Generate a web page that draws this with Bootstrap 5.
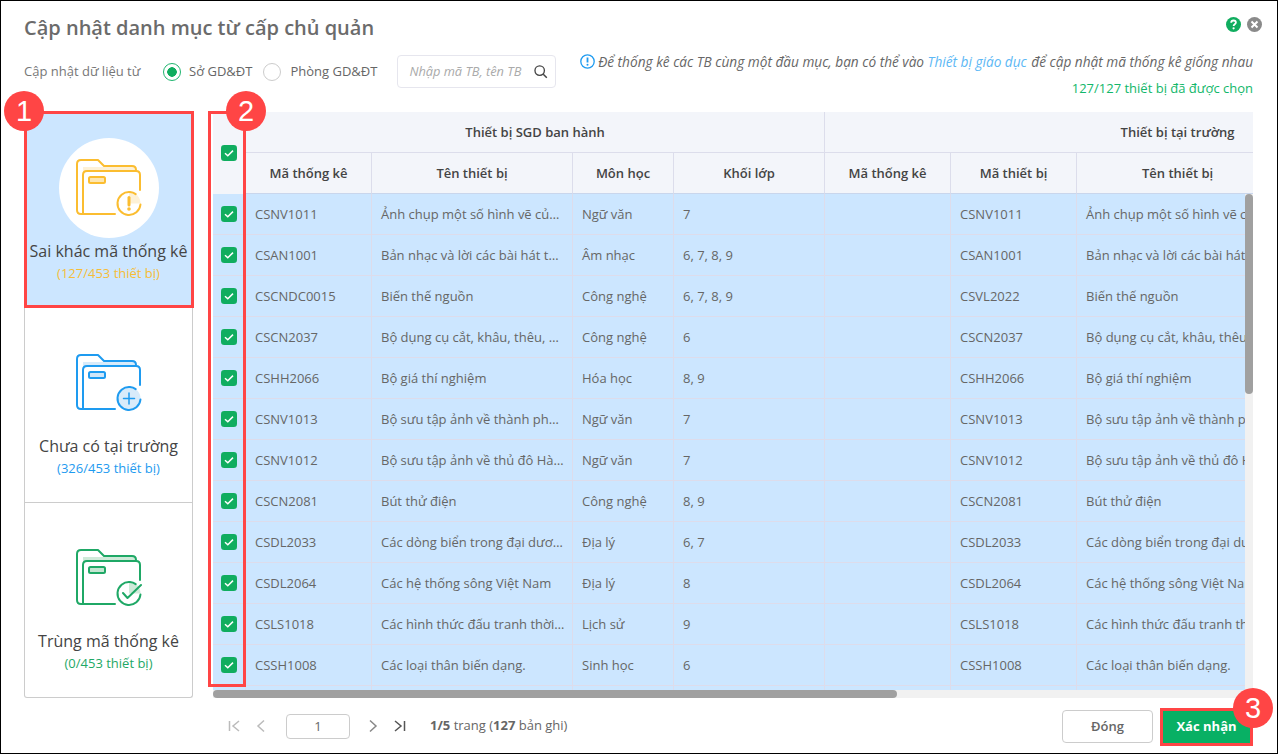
<!DOCTYPE html>
<html lang="vi">
<head>
<meta charset="utf-8">
<title>Cập nhật danh mục từ cấp chủ quản</title>
<link href="https://cdn.jsdelivr.net/npm/bootstrap@5.3.0/dist/css/bootstrap.min.css" rel="stylesheet">
<style>
html,body{height:100%;overflow:hidden}
body{margin:0;background:#fff;font-family:"Open Sans","Noto Sans",sans-serif;font-size:13px;color:#666}
.dlg{width:1278px;height:754px;border:1px solid #000;padding:0 24px 0 23px;display:flex;flex-direction:column;overflow:hidden;background:#fff}
.dlg-head{height:54px;flex:none}
.dlg-title{font-size:20px;font-weight:600;color:#6b6b6b;margin:0;line-height:27px;padding-top:13px}
.dlg-tools{padding-top:16px;margin-right:-9px;gap:6px}
.filter{height:57px;flex:none}
.f-label{color:#777;font-size:13px;width:139px}
.f-radio{display:flex;align-items:center;gap:8px;font-size:13px;color:#666;margin:0}
.f-radio input{width:18px;height:18px;margin:0;border:1px solid #ccc;box-shadow:none;background-color:#fff}
.f-radio input:checked{border-color:#1fb56f;background-color:#fff;background-image:radial-gradient(circle,#10ad5f 0 4.5px,transparent 5px)}
.f-radio-b{margin-left:11px;gap:9px}
.f-search{width:159px;height:33px;border:1px solid #e6e6ee;border-radius:4px;margin-left:20px;padding:0 7px 0 11px;flex:none}
.f-search input{border:0;outline:0;width:100%;min-width:0;padding:0;font-size:12.8px;font-style:italic;background:none}
.f-search input::placeholder{color:#aaa}
.f-hint{font-size:13.65px;font-style:italic;color:#666;line-height:18px;white-space:nowrap;margin-top:-2px}
.f-hint a{color:#5cb8f5;text-decoration:none;margin-right:1px}
.f-count{font-size:13px;color:#12b76a;line-height:18px;margin-top:8px}
.body-row{height:586px;flex:none;gap:20px}
.cat-list{width:169px;flex:none;border-radius:0}
.cat-item{height:195px;padding:25px 0 0;border:1px solid #ccc;border-radius:0!important;display:flex;flex-direction:column;align-items:center;background:#fff;flex:none}
.cat-item:first-child{height:196px}
.cat-item+.cat-item{border-top-width:0}
.cat-item:last-child{border-radius:0 0 3px 3px!important}
.cat-item.on{background:#cce6ff}
.cat-ico{width:100px;height:100px;border-radius:50%;display:flex;align-items:center;justify-content:center;flex:none}
.on .cat-ico{background:#fff}
.cat-name{font-size:16px;color:#444;line-height:26px;white-space:nowrap}
.cat-num{font-size:13px;line-height:18px}
.c-y{color:#f7bd37}.c-b{color:#1e9bf0}.c-g{color:#1fa866}
.tbl-box{width:1040px;position:relative;overflow:hidden;flex:none;background:#f1f1f1}
.dm-table{--bs-table-bg:#cce6ff;--bs-table-color:#666;table-layout:fixed;width:1318px;border-collapse:separate;border-spacing:0;margin:0;font-size:13px}
.dm-table>thead>tr>th{background:#f3f5fa;color:#444;font-weight:600;text-align:center;height:41px;padding:2px 10px 0;vertical-align:middle;border-bottom:1px solid #dcddeb;border-right:1px solid #dcddeb}
.dm-table>thead>tr>th.nb{border-bottom-color:#f3f5fa;border-right-color:#f3f5fa}
.dm-table>thead>tr>th.hl{border-bottom-color:#c9d6ec}
.dm-table>tbody>tr>td{height:41px;padding:2px 6px 0 9px;vertical-align:middle;border-bottom:1px solid #dddceb;border-right:1px solid #dddceb;white-space:nowrap;overflow:hidden;text-overflow:ellipsis;box-shadow:none}
.dm-check{width:16px;height:16px;margin:0;display:block;border:0;border-radius:3px;background-color:#10ad5f;box-shadow:none;margin-left:8px}
.dm-check:checked{background-color:#10ad5f;background-size:16px 16px;background-image:url("data:image/svg+xml,%3csvg xmlns='http://www.w3.org/2000/svg' viewBox='0 0 16 16'%3e%3cpath fill='none' stroke='%23fff' stroke-width='1.500' d='M4 8.200l2.800 2.600L12 5.600'/%3e%3c/svg%3e")}
.dm-table .cc{padding:0!important}
.sb-v{position:absolute;right:0;top:82px;width:8px;height:200px;background:#a0a0a0;border-radius:4px}
.sb-vt{position:absolute;right:0;top:82px;bottom:0;width:8px;background:#f1f1f1}
.sb-ht{position:absolute;left:0;right:0;bottom:0;height:8px;background:#f1f1f1}
.sb-h{position:absolute;left:0;bottom:0;width:684px;height:8px;background:#a0a0a0;border-radius:4px}
.foot{height:54px;flex:none;padding:2px 0 0 204px}
.pg-ico{width:12px;height:14px;flex:none;display:block}
.pg-g1{margin-left:15px}.pg-g2{margin-left:19px}.pg-g3{margin-left:17px}.pg-g4{margin-left:15px}
.pg-input{width:64px;height:25px;border:1px solid #ccc;border-radius:4px;text-align:center;font-size:13px;color:#666;padding:0;outline:0}
.pg-text{font-size:13px;color:#666;margin-left:24px}
.pg-text b{font-weight:700}
.btn-close-d{width:91px;height:33px;border:1px solid #ccc;border-radius:4px;background:#fff;color:#666;font-size:13px;font-weight:600;padding:1px 0 0}
.btn-ok{width:87px;height:33px;border:0;border-radius:0;background:#08b064;color:#fff;font-size:13px;font-weight:700;padding:1px 0 0;margin-left:10px;margin-right:3px}
.mark-box{position:absolute;border:3px solid #ff4545;pointer-events:none}
.mark-num{position:absolute;width:40px;height:40px;border-radius:50%;background:#ff4545;color:#fff;font:400 29px/40px "Liberation Sans",sans-serif;text-align:center}
</style>
</head>
<body>
<div class="dlg">
  <div class="dlg-head d-flex justify-content-between align-items-start">
    <h1 class="dlg-title">Cập nhật danh mục từ cấp chủ quản</h1>
    <div class="dlg-tools d-flex">
      <svg width="15" height="15" viewBox="0 0 15 15"><circle cx="7.5" cy="7.5" r="7.5" fill="#10ad5f"/><path d="M5.2 5.8c0-1.5 1-2.3 2.4-2.3s2.3.8 2.3 2c0 1.800-2.300 1.700-2.300 3.500" fill="none" stroke="#fff" stroke-width="1.800"/><circle cx="7.600" cy="11.300" r="1.100" fill="#fff"/></svg>
      <svg width="15" height="15" viewBox="0 0 15 15"><circle cx="7.5" cy="7.5" r="7.5" fill="#8a8a8a"/><path d="M4.500 4.500l6 6M10.500 4.500l-6 6" stroke="#fff" stroke-width="2"/></svg>
    </div>
  </div>
  <div class="filter d-flex align-items-start">
    <div class="d-flex align-items-center" style="height:33px">
      <span class="f-label">Cập nhật dữ liệu từ</span>
      <label class="f-radio"><input class="form-check-input" type="radio" name="src" checked>Sở GD&amp;ĐT</label>
      <label class="f-radio f-radio-b"><input class="form-check-input" type="radio" name="src">Phòng GD&amp;ĐT</label>
      <div class="f-search d-flex align-items-center">
        <input type="text" placeholder="Nhập mã TB, tên TB">
        <svg width="17" height="17" viewBox="0 0 17 17" class="flex-none"><circle cx="7.500" cy="7.500" r="5.300" fill="none" stroke="#444" stroke-width="1.500"/><path d="M11.500 11.500l4 4" stroke="#444" stroke-width="1.700"/></svg>
      </div>
    </div>
    <div class="ms-auto text-end">
      <div class="f-hint"><svg width="15" height="15" viewBox="0 0 15 15" style="vertical-align:-2px;margin-right:3px"><circle cx="7.500" cy="7.500" r="6.700" fill="#fff" stroke="#1e9bf0" stroke-width="1.300"/><path d="M7.500 3.500v5" stroke="#1e9bf0" stroke-width="1.800"/><circle cx="7.500" cy="10.800" r="1" fill="#1e9bf0"/></svg>Để thống kê các TB cùng một đầu mục, bạn có thể vào <a href="#">Thiết bị giáo dục</a> để cập nhật mã thống kê giống nhau</div>
      <div class="f-count">127/127 thiết bị đã được chọn</div>
    </div>
  </div>
  <div class="body-row d-flex">
    <div class="cat-list list-group">
      <div class="list-group-item cat-item on">
        <div class="cat-ico">
          <svg width="66" height="58" viewBox="0 0 66 58" fill="none" stroke-linecap="round" stroke-linejoin="round" stroke-width="2" stroke="#fbbd30"><rect x="7" y="8" width="52" height="5" fill="#fdf1d6" stroke="none"/><path d="M7 55H5Q1 55 1 51V5Q1 1 5 1H22L28 7H56Q60 7 60 11"/><path d="M7 55V16Q7 12 11 12H60Q64 12 64 16V31M7 55H39"/><rect x="13" y="18" width="16" height="6" rx="1.500" fill="#fde6b0"/><path d="M53 33a11.500 11.500 0 0 1 11.500 11.500H53z" fill="#fdf1d6" stroke="none"/><circle cx="53" cy="44.500" r="11.500" stroke-dasharray="60 12" transform="rotate(5 53 44.500)"/><path d="M53 38.500v7.500" stroke-width="3"/><circle cx="53" cy="50" r=".8"/></svg>
        </div>
        <div class="cat-name">Sai khác mã thống kê</div>
        <div class="cat-num c-y">(127/453 thiết bị)</div>
      </div>
      <div class="list-group-item cat-item">
        <div class="cat-ico">
          <svg width="66" height="58" viewBox="0 0 66 58" fill="none" stroke-linecap="round" stroke-linejoin="round" stroke-width="2" stroke="#1e9bf0"><rect x="7" y="8" width="52" height="5" fill="#d8ebfa" stroke="none"/><path d="M7 55H5Q1 55 1 51V5Q1 1 5 1H22L28 7H56Q60 7 60 11"/><path d="M7 55V16Q7 12 11 12H60Q64 12 64 16V31M7 55H39"/><rect x="13" y="18" width="16" height="6" rx="1.500" fill="#cfe6f9"/><circle cx="53" cy="44.500" r="11.500" fill="#d8ebfa" stroke-dasharray="60 12" transform="rotate(5 53 44.500)"/><path d="M53 39v11M47.500 44.500h11" stroke-width="1.500"/></svg>
        </div>
        <div class="cat-name">Chưa có tại trường</div>
        <div class="cat-num c-b">(326/453 thiết bị)</div>
      </div>
      <div class="list-group-item cat-item">
        <div class="cat-ico">
          <svg width="66" height="58" viewBox="0 0 66 58" fill="none" stroke-linecap="round" stroke-linejoin="round" stroke-width="2" stroke="#1fa866"><rect x="7" y="8" width="52" height="5" fill="#cfead9" stroke="none"/><path d="M7 55H5Q1 55 1 51V5Q1 1 5 1H22L28 7H56Q60 7 60 11"/><path d="M7 55V16Q7 12 11 12H60Q64 12 64 16V31M7 55H39"/><rect x="13" y="18" width="16" height="6" rx="1.500" fill="#c3e6d1"/><path d="M53 33a11.500 11.500 0 0 1 11.500 11.500H53z" fill="#cfead9" stroke="none"/><circle cx="53" cy="44.500" r="11.500" stroke-dasharray="60 12" transform="rotate(5 53 44.500)"/><path d="M47 44l4.500 5L65 36"/></svg>
        </div>
        <div class="cat-name">Trùng mã thống kê</div>
        <div class="cat-num c-g">(0/453 thiết bị)</div>
      </div>
    </div>
    <div class="tbl-box">
      <table class="table dm-table">
        <colgroup><col style="width:33px"><col style="width:126px"><col style="width:201px"><col style="width:101px"><col style="width:151px"><col style="width:126px"><col style="width:126px"><col style="width:202px"><col style="width:101px"><col style="width:151px"></colgroup>
        <thead>
          <tr><th rowspan="2" class="nb cc"><input class="form-check-input dm-check" type="checkbox" checked></th><th colspan="4">Thiết bị SGD ban hành</th><th colspan="5">Thiết bị tại trường</th></tr>
          <tr><th class="hl">Mã thống kê</th><th class="hl">Tên thiết bị</th><th class="hl">Môn học</th><th class="hl">Khối lớp</th><th class="hl">Mã thống kê</th><th class="hl">Mã thiết bị</th><th class="hl">Tên thiết bị</th><th class="hl">Môn học</th><th class="hl">Khối lớp</th></tr>
        </thead>
        <tbody>
          <tr><td class="cc"><input class="form-check-input dm-check" type="checkbox" checked></td><td>CSNV1011</td><td>Ảnh chụp một số hình vẽ của họa sĩ</td><td>Ngữ văn</td><td>7</td><td></td><td>CSNV1011</td><td>Ảnh chụp một số hình vẽ của họa sĩ</td><td>Ngữ văn</td><td>7</td></tr>
          <tr><td class="cc"><input class="form-check-input dm-check" type="checkbox" checked></td><td>CSAN1001</td><td>Bản nhạc và lời các bài hát thiếu nhi</td><td>Âm nhạc</td><td>6, 7, 8, 9</td><td></td><td>CSAN1001</td><td>Bản nhạc và lời các bài hát thiếu nhi</td><td>Âm nhạc</td><td>6, 7, 8, 9</td></tr>
          <tr><td class="cc"><input class="form-check-input dm-check" type="checkbox" checked></td><td>CSCNDC0015</td><td>Biến thế nguồn</td><td>Công nghệ</td><td>6, 7, 8, 9</td><td></td><td>CSVL2022</td><td>Biến thế nguồn</td><td>Công nghệ</td><td>6, 7, 8, 9</td></tr>
          <tr><td class="cc"><input class="form-check-input dm-check" type="checkbox" checked></td><td>CSCN2037</td><td>Bộ dụng cụ cắt, khâu, thêu, đan len</td><td>Công nghệ</td><td>6</td><td></td><td>CSCN2037</td><td>Bộ dụng cụ cắt, khâu, thêu, đan len</td><td>Công nghệ</td><td>6</td></tr>
          <tr><td class="cc"><input class="form-check-input dm-check" type="checkbox" checked></td><td>CSHH2066</td><td>Bộ giá thí nghiệm</td><td>Hóa học</td><td>8, 9</td><td></td><td>CSHH2066</td><td>Bộ giá thí nghiệm</td><td>Hóa học</td><td>8, 9</td></tr>
          <tr><td class="cc"><input class="form-check-input dm-check" type="checkbox" checked></td><td>CSNV1013</td><td>Bộ sưu tập ảnh về thành phố Huế</td><td>Ngữ văn</td><td>7</td><td></td><td>CSNV1013</td><td>Bộ sưu tập ảnh về thành phố Huế</td><td>Ngữ văn</td><td>7</td></tr>
          <tr><td class="cc"><input class="form-check-input dm-check" type="checkbox" checked></td><td>CSNV1012</td><td>Bộ sưu tập ảnh về thủ đô Hà Nội xưa</td><td>Ngữ văn</td><td>7</td><td></td><td>CSNV1012</td><td>Bộ sưu tập ảnh về thủ đô Hà Nội xưa</td><td>Ngữ văn</td><td>7</td></tr>
          <tr><td class="cc"><input class="form-check-input dm-check" type="checkbox" checked></td><td>CSCN2081</td><td>Bút thử điện</td><td>Công nghệ</td><td>8, 9</td><td></td><td>CSCN2081</td><td>Bút thử điện</td><td>Công nghệ</td><td>8, 9</td></tr>
          <tr><td class="cc"><input class="form-check-input dm-check" type="checkbox" checked></td><td>CSDL2033</td><td>Các dòng biển trong đại dương thế giới</td><td>Địa lý</td><td>6, 7</td><td></td><td>CSDL2033</td><td>Các dòng biển trong đại dương thế giới</td><td>Địa lý</td><td>6, 7</td></tr>
          <tr><td class="cc"><input class="form-check-input dm-check" type="checkbox" checked></td><td>CSDL2064</td><td>Các hệ thống sông Việt Nam</td><td>Địa lý</td><td>8</td><td></td><td>CSDL2064</td><td>Các hệ thống sông Việt Nam</td><td>Địa lý</td><td>8</td></tr>
          <tr><td class="cc"><input class="form-check-input dm-check" type="checkbox" checked></td><td>CSLS1018</td><td>Các hình thức đấu tranh thời kỳ cổ đại</td><td>Lịch sử</td><td>9</td><td></td><td>CSLS1018</td><td>Các hình thức đấu tranh thời kỳ cổ đại</td><td>Lịch sử</td><td>9</td></tr>
          <tr><td class="cc"><input class="form-check-input dm-check" type="checkbox" checked></td><td>CSSH1008</td><td>Các loại thân biến dạng.</td><td>Sinh học</td><td>6</td><td></td><td>CSSH1008</td><td>Các loại thân biến dạng.</td><td>Sinh học</td><td>6</td></tr>
          <tr><td class="cc"></td><td></td><td></td><td></td><td></td><td></td><td></td><td></td><td></td><td></td></tr>
        </tbody>
      </table>
      <div class="sb-vt"></div><div class="sb-v"></div>
      <div class="sb-ht"></div><div class="sb-h"></div>
    </div>
  </div>
  <div class="foot d-flex align-items-center">
    <svg class="pg-ico" viewBox="0 0 12 14" fill="none" stroke="#bbb" stroke-width="1.500"><path d="M1.500 2v10M11 2L5 7l6 5"/></svg>
    <svg class="pg-ico pg-g1" viewBox="0 0 12 14" fill="none" stroke="#bbb" stroke-width="1.500"><path d="M9 1.500L3 7l6 5.500"/></svg>
    <input class="pg-input pg-g2" type="text" value="1">
    <svg class="pg-ico pg-g3" viewBox="0 0 12 14" fill="none" stroke="#888" stroke-width="1.500"><path d="M3 1.500L9 7l-6 5.500"/></svg>
    <svg class="pg-ico pg-g4" viewBox="0 0 12 14" fill="none" stroke="#555" stroke-width="1.500"><path d="M1 2l6 5-6 5M10.500 2v10"/></svg>
    <span class="pg-text"><b>1/5</b> trang (<b>127</b> bản ghi)</span>
    <button class="btn-close-d ms-auto" type="button">Đóng</button>
    <button class="btn-ok" type="button">Xác nhận</button>
  </div>
</div>
<div class="mark-box" style="left:24px;top:111px;width:170px;height:197px"></div>
<div class="mark-box" style="left:208px;top:111px;width:38px;height:576px"></div>
<div class="mark-box" style="left:1160px;top:708px;width:93px;height:38px"></div>
<div class="mark-num" style="left:4px;top:91px">1</div>
<div class="mark-num" style="left:226px;top:91px">2</div>
<div class="mark-num" style="left:1233px;top:688px">3</div>
</body>
</html>
